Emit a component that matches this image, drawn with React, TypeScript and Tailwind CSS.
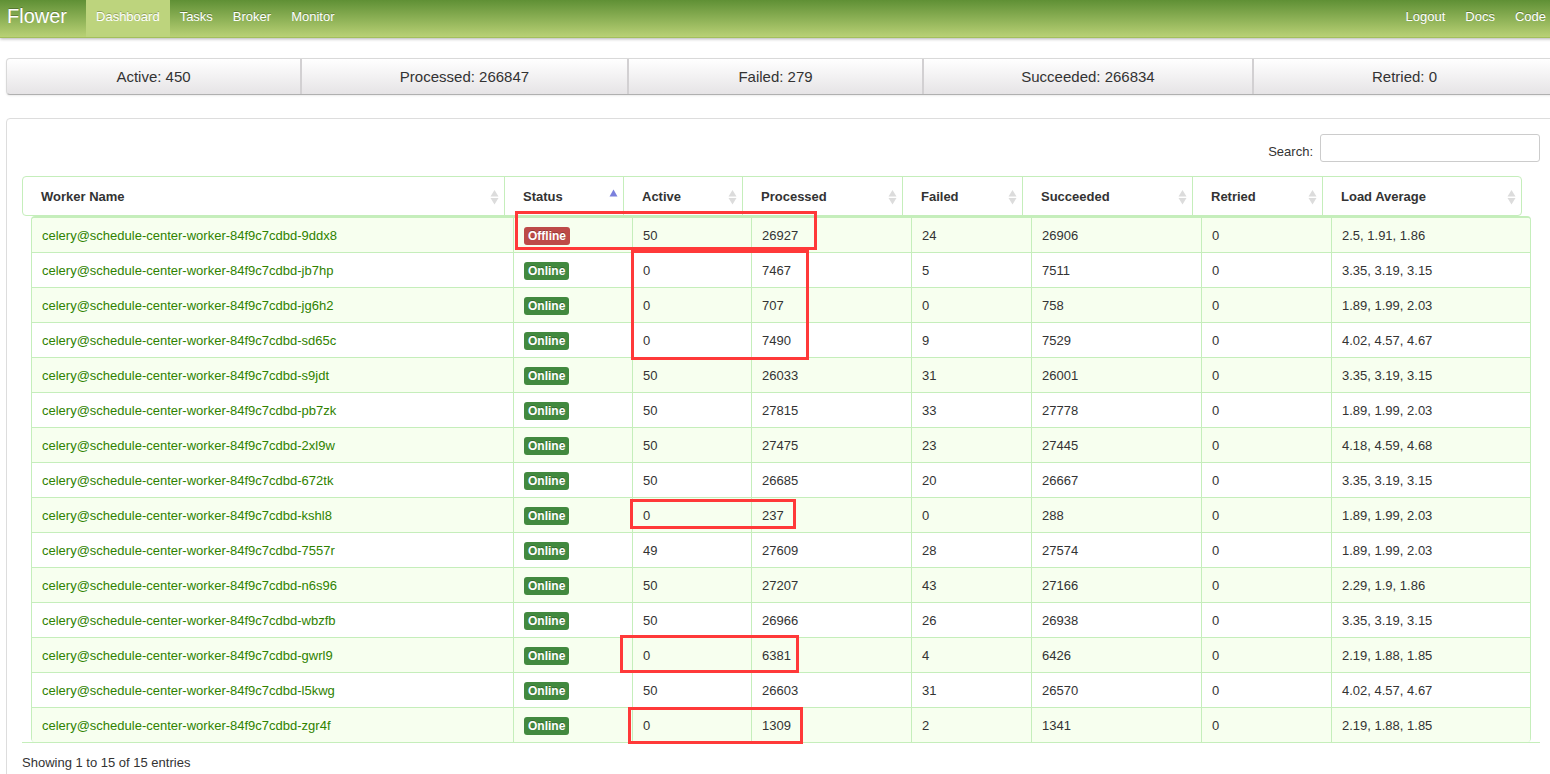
import React from "react";

type Worker = {
  id: string;
  online: boolean;
  active: number;
  processed: number;
  failed: number;
  succeeded: number;
  retried: number;
  load: string;
};

const w = (
  id: string,
  active: number,
  processed: number,
  failed: number,
  succeeded: number,
  load: string,
  online = true,
): Worker => ({ id, online, active, processed, failed, succeeded, retried: 0, load });

const workers: Worker[] = [
  w("9ddx8", 50, 26927, 24, 26906, "2.5, 1.91, 1.86", false),
  w("jb7hp", 0, 7467, 5, 7511, "3.35, 3.19, 3.15"),
  w("jg6h2", 0, 707, 0, 758, "1.89, 1.99, 2.03"),
  w("sd65c", 0, 7490, 9, 7529, "4.02, 4.57, 4.67"),
  w("s9jdt", 50, 26033, 31, 26001, "3.35, 3.19, 3.15"),
  w("pb7zk", 50, 27815, 33, 27778, "1.89, 1.99, 2.03"),
  w("2xl9w", 50, 27475, 23, 27445, "4.18, 4.59, 4.68"),
  w("672tk", 50, 26685, 20, 26667, "3.35, 3.19, 3.15"),
  w("kshl8", 0, 237, 0, 288, "1.89, 1.99, 2.03"),
  w("7557r", 49, 27609, 28, 27574, "1.89, 1.99, 2.03"),
  w("n6s96", 50, 27207, 43, 27166, "2.29, 1.9, 1.86"),
  w("wbzfb", 50, 26966, 26, 26938, "3.35, 3.19, 3.15"),
  w("gwrl9", 0, 6381, 4, 6426, "2.19, 1.88, 1.85"),
  w("l5kwg", 50, 26603, 31, 26570, "4.02, 4.57, 4.67"),
  w("zgr4f", 0, 1309, 2, 1341, "2.19, 1.88, 1.85"),
];

const columns = [
  "Worker Name",
  "Status",
  "Active",
  "Processed",
  "Failed",
  "Succeeded",
  "Retried",
  "Load Average",
];

const stats = ["Active: 450", "Processed: 266847", "Failed: 279", "Succeeded: 266834", "Retried: 0"];

const highlights = [
  "left-[515px] top-[211px] h-[39px] w-[302px]",
  "left-[631px] top-[250px] h-[110px] w-[178px]",
  "left-[630px] top-[499px] h-[30px] w-[166px]",
  "left-[620px] top-[635px] h-[38px] w-[179px]",
  "left-[628px] top-[707px] h-[37px] w-[175px]",
];

function Columns() {
  return (
    <colgroup>
      <col />
      <col className="w-[119px]" />
      <col className="w-[119px]" />
      <col className="w-[160px]" />
      <col className="w-[120px]" />
      <col className="w-[170px]" />
      <col className="w-[130px]" />
      <col className="w-[199px]" />
    </colgroup>
  );
}

function SortIcon({ sorted }: { sorted: boolean }) {
  return (
    <svg width="9" height="16" viewBox="0 0 9 16" aria-hidden="true" className="shrink-0">
      {sorted ? (
        <path d="M4.5 0.5 8.500 7.500H.5Z" fill="#7b80dd" />
      ) : (
        <path d="M4.5 1 8.500 7.500H.5ZM.5 9H8.500L4.500 15.500Z" fill="#dcdcdc" />
      )}
    </svg>
  );
}

function NavLink({ label, active = false }: { label: string; active?: boolean }) {
  return (
    <a
      href="#"
      className={
        active
          ? "bg-[#bdd47d] px-[10px] pt-[8px] leading-[18px] text-white"
          : "px-[10px] pt-[8px] leading-[18px] text-white"
      }
    >
      {label}
    </a>
  );
}

export default function App() {
  return (
    <div className="relative min-h-screen overflow-hidden bg-white font-['Liberation_Sans',Arial,sans-serif] text-[13px] leading-[18px] text-[#333]">
      <div className="-mr-[6px]">
        <header className="flex h-[38px] border-b border-[#a3bf5c] bg-linear-to-b from-[#5f9035] to-[#b9d175] shadow-[0_1px_3px_rgba(0,0,0,0.3)] [text-shadow:0_-1px_0_rgba(0,0,0,0.25)]">
          <a href="#" className="pr-[19px] pl-[7px] pt-[6px] text-[20px] leading-[20px] text-white">
            Flower
          </a>
          <nav className="flex flex-1" aria-label="Main">
            <NavLink label="Dashboard" active />
            <NavLink label="Tasks" />
            <NavLink label="Broker" />
            <NavLink label="Monitor" />
          </nav>
          <nav className="flex" aria-label="Account">
            <NavLink label="Logout" />
            <NavLink label="Docs" />
            <NavLink label="Code" />
          </nav>
        </header>

        <main className="pl-[6px] pt-[20px]">
          <div className="grid grid-cols-[295fr_327fr_295fr_330fr_301fr] rounded-[4px] border border-[#d9d9d9] border-b-[#b0b0b0] bg-linear-to-b from-white to-[#e6e4e6] text-center text-[15px] leading-[35px] shadow-[0_1px_2px_rgba(0,0,0,0.08)]">
            {stats.map((s) => (
              <div key={s} className="border-r-2 border-[#d2d0d2] last:border-r-0">
                {s}
              </div>
            ))}
          </div>

          <section className="mt-[23px] rounded-[4px] border border-[#ddd] p-[15px]">
            <div className="flex items-center justify-end gap-[7px]">
              <label htmlFor="search" className="pt-[8px]">
                Search:
              </label>
              <input
                id="search"
                type="search"
                className="h-[28px] w-[220px] rounded-[3px] border border-[#ccc] px-[6px] outline-none"
              />
            </div>

            <div className="mr-[18px] mt-[14px] rounded-[4px] border border-[#c5eebb]">
              <table className="w-full table-fixed border-separate border-spacing-0">
                <Columns />
                <thead>
                  <tr>
                    {columns.map((c, i) => (
                      <th
                        key={c}
                        scope="col"
                        className="h-[38px] border-l border-[#c5eebb] p-0 pt-[2px] text-left first:border-l-0"
                      >
                        <button
                          type="button"
                          className="flex w-full items-center justify-between pl-[18px] pr-[5px] text-left font-bold"
                        >
                          {c}
                          <SortIcon sorted={i === 1} />
                        </button>
                      </th>
                    ))}
                  </tr>
                </thead>
              </table>
            </div>

            <div className="border-b border-[#c5eebb] px-[9px]">
              <div className="overflow-hidden rounded-[4px] border-x border-t-2 border-[#c5eebb]">
                <table className="w-full table-fixed border-separate border-spacing-0" aria-label="Workers">
                  <Columns />
                  <tbody>
                    {workers.map((k) => (
                      <tr
                        key={k.id}
                        className="odd:bg-[#f7ffef] [&>td]:h-[35px] last:[&>td]:h-[34px] [&>td]:border-b last:[&>td]:border-b-0 [&>td]:border-l [&>td]:border-[#c5eebb] [&>td]:px-[10px] [&>td]:pt-[2px] [&>td]:pb-0 [&>td:first-child]:border-l-0"
                      >
                        <td>
                          <a href="#" className="text-[#2f8200]">
                            celery@schedule-center-worker-84f9c7cdbd-{k.id}
                          </a>
                        </td>
                        <td>
                          <span
                            className={
                              k.online
                                ? "inline-block rounded-[3px] bg-[#42893f] px-[4px] text-[12px] font-bold text-white [text-shadow:0_-1px_0_rgba(0,0,0,0.25)]"
                                : "inline-block rounded-[3px] bg-[#bd4a48] px-[4px] text-[12px] font-bold text-white [text-shadow:0_-1px_0_rgba(0,0,0,0.25)]"
                            }
                          >
                            {k.online ? "Online" : "Offline"}
                          </span>
                        </td>
                        <td>{k.active}</td>
                        <td>{k.processed}</td>
                        <td>{k.failed}</td>
                        <td>{k.succeeded}</td>
                        <td>{k.retried}</td>
                        <td>{k.load}</td>
                      </tr>
                    ))}
                  </tbody>
                </table>
              </div>
            </div>

            <p className="pt-[11px]">Showing 1 to 15 of 15 entries</p>
          </section>
        </main>
      </div>

      {highlights.map((h) => (
        <div key={h} className={`pointer-events-none absolute border-3 border-[#ff3939] ${h}`} />
      ))}
    </div>
  );
}
